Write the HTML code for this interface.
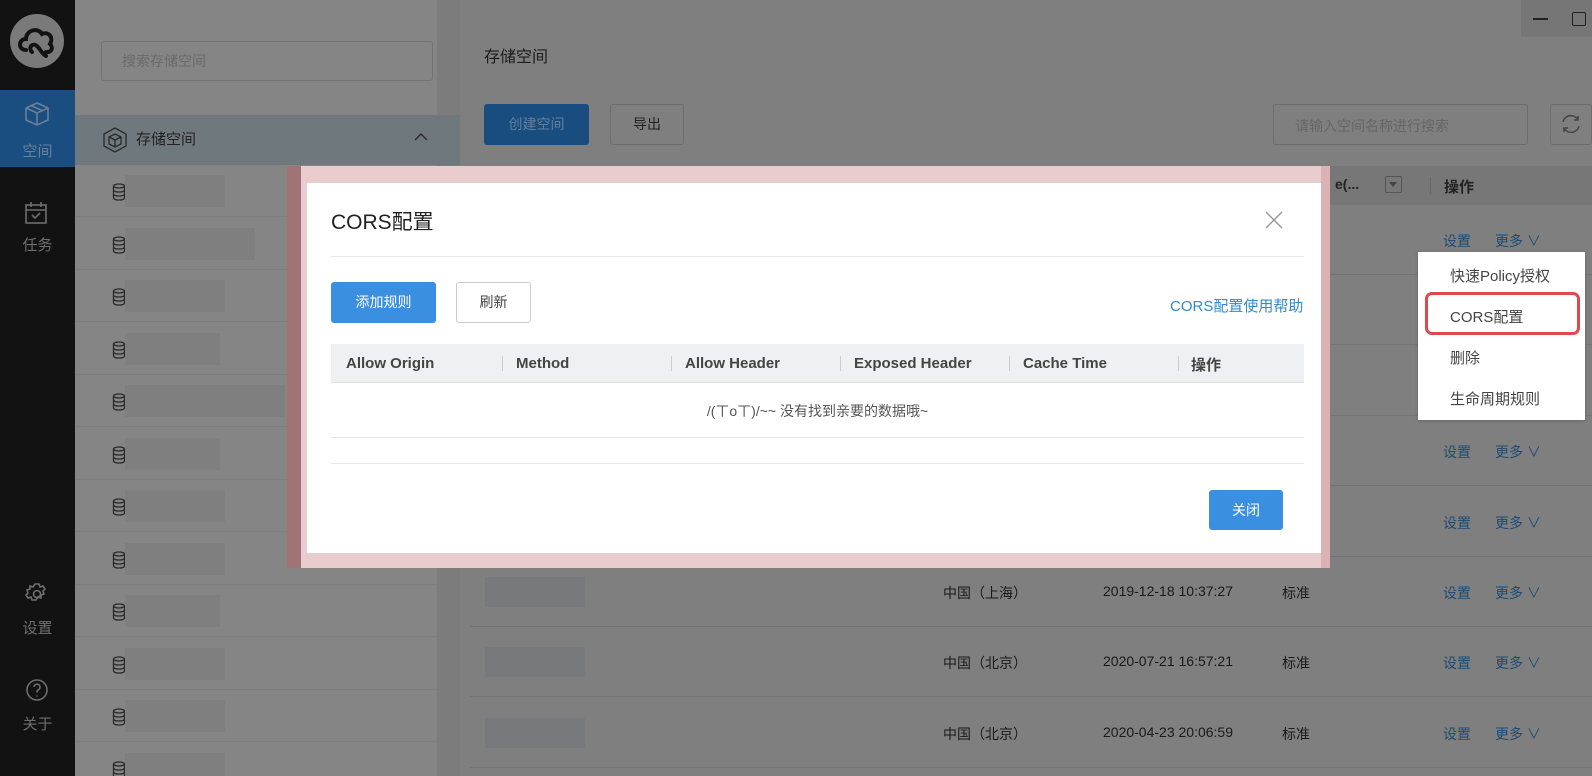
<!DOCTYPE html>
<html style="width:1592px;height:776px;overflow:hidden"><head><meta charset="utf-8"><style>
*{margin:0;padding:0;box-sizing:border-box}
body{width:1592px;height:776px;overflow:hidden;position:relative;background:#7f7f7f;font-family:"Liberation Sans","Noto Sans CJK SC",sans-serif;font-size:14px;color:#1f1f1f}
.a{position:absolute}
.side{left:0;top:0;width:75px;height:776px;background:#121212}
.nav{left:0;width:75px;text-align:center;color:#6e6e6e;font-size:15px}
.panel{left:75px;top:0;width:362px;height:776px;background:#858585}
.row{left:75px;width:362px;height:52px;border-bottom:1px solid #7d7d7d}
.blk{background:#7b7b7b}
.mrow{left:470px;width:1122px;border-bottom:1px solid #747474;height:70px}
.cell{font-size:14px;color:#1a1a1a}
.lnk{color:#1d4b75}
#wrap{position:absolute;left:0;top:0;width:1592px;height:776px;overflow:hidden}
</style></head><body><div id="wrap">
<div class="a side"></div>
<div class="a" style="left:10px;top:14px;width:54px;height:54px;border-radius:50%;background:#7a7a7a"></div>
<svg class="a" style="left:14px;top:20px" width="46" height="42" viewBox="0 0 46 42"><path d="M12 30 C4 30 4 19 12 19 C12 10 24 7 28 14 C34 11 40 17 36 24 C40 28 37 33 32 32 M18 32 C14 28 18 22 23 26 C27 30 28 34 32 36" fill="none" stroke="#121212" stroke-width="4" stroke-linecap="round"/></svg>
<div class="a" style="left:0;top:90px;width:75px;height:77px;background:#1a4d80"></div>
<svg class="a" style="left:24px;top:101px" width="26" height="26" viewBox="0 0 26 26" fill="none" stroke="#6a7f97" stroke-width="1.6"><path d="M13 2 L24 7 L24 19 L13 24 L2 19 L2 7 Z M2 7 L13 12 L24 7 M13 12 V24 M7 4.5 L18 9.5"/></svg>
<div class="a nav" style="top:140px;color:#6c8098">空间</div>
<svg class="a" style="left:24px;top:201px" width="24" height="24" viewBox="0 0 24 24" fill="none" stroke="#6e6e6e" stroke-width="1.6"><rect x="2" y="4" width="20" height="18"/><path d="M2 9H22M7 1V6M17 1V6M8 14l3 3 5-5"/></svg>
<div class="a nav" style="top:234px">任务</div>
<svg class="a" style="left:25px;top:582px" width="24" height="24" viewBox="0 0 24 24" fill="none" stroke="#6e6e6e" stroke-width="1.6"><circle cx="12" cy="12" r="3.5"/><path d="M10 2h4l1 3 3-1 2 3-2 2 1 3-3 1 0 3-3-1-2 3h-4l-1-3-3 1-2-3 2-2-1-3 3-1 0-3 3 1z"/></svg>
<div class="a nav" style="top:617px">设置</div>
<svg class="a" style="left:25px;top:678px" width="24" height="24" viewBox="0 0 24 24" fill="none" stroke="#6e6e6e" stroke-width="1.6"><circle cx="12" cy="12" r="10"/><path d="M9 9a3 3 0 1 1 4 3c-1 .5-1 1.5-1 2.5M12 17.5v1"/></svg>
<div class="a nav" style="top:713px">关于</div>

<div class="a panel"></div>
<div class="a" style="left:437px;top:0;width:23px;height:776px;background:#7c7c7c"></div>
<div class="a" style="left:101px;top:41px;width:332px;height:40px;border:1px solid #747474;border-radius:3px;color:#6a6a6a;padding:9px 20px;font-size:14px">搜索存储空间</div>
<div class="a" style="left:75px;top:115px;width:385px;height:50px;background:#6f787d"></div>
<svg class="a" style="left:103px;top:127px" width="24" height="26" viewBox="0 0 24 26" fill="none" stroke="#2a2a2a" stroke-width="1.3"><path d="M12 1L23 7V19L12 25L1 19V7Z M6 10L12 7L18 10V17L12 20L6 17Z M6 10L12 13L18 10M12 13V20"/></svg>
<div class="a" style="left:136px;top:128px;font-size:15px;color:#222">存储空间</div>
<svg class="a" style="left:414px;top:132px" width="14" height="10" viewBox="0 0 14 10" fill="none" stroke="#2a2a2a" stroke-width="1.4"><path d="M1 8L7 2L13 8"/></svg>
<div id="rows"></div>
<script>
var h='';
var w=[100,130,100,95,160,95,100,100,95,100,100,100];
for(var i=0;i<12;i++){var t=165+i*52.5;
h+='<div class="a row" style="top:'+t+'px"></div>';
h+='<svg class="a" style="left:112px;top:'+(t+18)+'px" width="14" height="18" viewBox="0 0 14 18" fill="none" stroke="#2a2a2a" stroke-width="1.3"><ellipse cx="7" cy="3" rx="5.5" ry="2"/><path d="M1.5 3v12c0 1.2 2.5 2 5.5 2s5.5-.8 5.5-2V3M1.5 7c0 1.2 2.5 2 5.5 2s5.5-.8 5.5-2M1.5 11c0 1.2 2.5 2 5.5 2s5.5-.8 5.5-2"/></svg>';
h+='<div class="a blk" style="left:125px;top:'+(t+10)+'px;width:'+w[i]+'px;height:32px;background:#7f7f7f"></div>';}
var d=['','','','','','中国（上海）|2019-12-18 10:37:27','中国（北京）|2020-07-21 16:57:21','中国（北京）|2020-04-23 20:06:59'];
for(var j=0;j<8;j++){var y=205+j*70.4;
h+='<div class="a mrow" style="top:'+y+'px"></div>';
h+='<div class="a blk" style="left:485px;top:'+(y+20)+'px;width:100px;height:30px;background:#78797d"></div>';
h+='<div class="a cell lnk" style="left:1443px;top:'+(y+26)+'px">设置</div><div class="a cell lnk" style="left:1495px;top:'+(y+26)+'px">更多 ∨</div>';
if(d[j]){var p=d[j].split('|');h+='<div class="a cell" style="left:943px;top:'+(y+26)+'px">'+p[0]+'</div><div class="a cell" style="left:1103px;top:'+(y+26)+'px">'+p[1]+'</div><div class="a cell" style="left:1282px;top:'+(y+26)+'px">标准</div>';}}
document.getElementById('rows').innerHTML=h;
</script>
<div class="a" style="left:1521px;top:0;width:71px;height:37px;background:#767676"></div>
<div class="a" style="left:1533px;top:18px;width:15px;height:2px;background:#222"></div>
<div class="a" style="left:1572px;top:12px;width:14px;height:14px;border:1.5px solid #222;border-radius:2px"></div>
<div class="a" style="left:484px;top:43px;font-size:16px;color:#1c1c1c">存储空间</div>
<div class="a" style="left:484px;top:104px;width:105px;height:41px;background:#194d80;border-radius:3px;color:#5f7f9f;text-align:center;line-height:41px">创建空间</div>
<div class="a" style="left:610px;top:104px;width:74px;height:41px;border:1px solid #6c6c6c;border-radius:3px;text-align:center;line-height:39px;color:#222">导出</div>
<div class="a" style="left:1273px;top:104px;width:255px;height:41px;border:1px solid #6c6c6c;border-radius:3px;color:#666;padding:11px 21px">请输入空间名称进行搜索</div>
<div class="a" style="left:1550px;top:104px;width:42px;height:41px;border:1px solid #6c6c6c;border-radius:3px"></div>
<svg class="a" style="left:1560px;top:113px" width="22" height="22" viewBox="0 0 22 22" fill="none" stroke="#444" stroke-width="1.5"><path d="M3 9a8 8 0 0 1 15-2M19 13a8 8 0 0 1-15 2M18 3v4h-4M4 19v-4h4"/></svg>
<div class="a" style="left:460px;top:166px;width:1132px;height:39px;background:#777"></div>
<div class="a" style="left:1335px;top:176px;font-weight:bold;color:#222">e(...</div>
<div class="a" style="left:1385px;top:176px;width:17px;height:17px;border:1px solid #555;border-radius:2px"></div>
<div class="a" style="left:1389px;top:182px;border:4px solid transparent;border-top:5px solid #444"></div>
<div class="a" style="left:1430px;top:177px;width:1px;height:17px;background:#666"></div>
<div class="a" style="left:1444px;top:176px;font-weight:bold;color:#222;font-size:15px">操作</div>

<div class="a" style="left:1418px;top:252px;width:167px;height:168px;background:#fff;box-shadow:0 1px 4px rgba(0,0,0,.2)"></div>
<div class="a" style="left:1450px;top:265px;color:#444;font-size:15px">快速Policy授权</div>
<div class="a" style="left:1425px;top:292px;width:155px;height:43px;border:3px solid #e0484b;border-radius:7px"></div>
<div class="a" style="left:1450px;top:306px;color:#444;font-size:15px">CORS配置</div>
<div class="a" style="left:1450px;top:347px;color:#444;font-size:15px">删除</div>
<div class="a" style="left:1450px;top:388px;color:#444;font-size:15px">生命周期规则</div>

<div class="a" style="left:287px;top:166px;width:14px;height:402px;background:#a07474"></div>
<div class="a" style="left:301px;top:166px;width:1029px;height:402px;background:#e9cdce"></div>
<div class="a" style="left:1321px;top:166px;width:9px;height:402px;background:#dcb3b4"></div>
<div class="a" style="left:307px;top:183px;width:1014px;height:370px;background:#fff"></div>
<div class="a" style="left:331px;top:206px;font-size:21px;color:#222">CORS配置</div>
<svg class="a" style="left:1265px;top:211px" width="18" height="18" viewBox="0 0 18 18" stroke="#999" stroke-width="1.5"><path d="M1 1L17 17M17 1L1 17"/></svg>
<div class="a" style="left:331px;top:256px;width:973px;height:1px;background:#e8e8e8"></div>
<div class="a" style="left:331px;top:282px;width:105px;height:41px;background:#3a8fe1;border-radius:3px;color:#fff;text-align:center;line-height:41px">添加规则</div>
<div class="a" style="left:456px;top:282px;width:75px;height:41px;border:1px solid #ccc;border-radius:3px;text-align:center;line-height:39px;color:#444">刷新</div>
<div class="a" style="left:1170px;top:295px;color:#2f8bcb;font-size:15px">CORS配置使用帮助</div>
<div class="a" style="left:331px;top:344px;width:973px;height:39px;background:#eff0f4;border-bottom:1px solid #e0e0e0"></div>
<div class="a" style="left:346px;top:355px;font-weight:bold;color:#444;font-size:15px">Allow Origin</div>
<div class="a" style="left:502px;top:356px;width:1px;height:15px;background:#ccc"></div>
<div class="a" style="left:516px;top:355px;font-weight:bold;color:#444;font-size:15px">Method</div>
<div class="a" style="left:671px;top:356px;width:1px;height:15px;background:#ccc"></div>
<div class="a" style="left:685px;top:355px;font-weight:bold;color:#444;font-size:15px">Allow Header</div>
<div class="a" style="left:840px;top:356px;width:1px;height:15px;background:#ccc"></div>
<div class="a" style="left:854px;top:355px;font-weight:bold;color:#444;font-size:15px">Exposed Header</div>
<div class="a" style="left:1009px;top:356px;width:1px;height:15px;background:#ccc"></div>
<div class="a" style="left:1023px;top:355px;font-weight:bold;color:#444;font-size:15px">Cache Time</div>
<div class="a" style="left:1178px;top:356px;width:1px;height:15px;background:#ccc"></div>
<div class="a" style="left:1191px;top:354px;font-weight:bold;color:#444;font-size:15px">操作</div>
<div class="a" style="left:331px;top:401px;width:973px;text-align:center;color:#555;font-size:14px">/(ㄒoㄒ)/~~ 没有找到亲要的数据哦~</div>
<div class="a" style="left:331px;top:437px;width:973px;height:1px;background:#e6e6e6"></div>
<div class="a" style="left:331px;top:463px;width:973px;height:1px;background:#e6e6e6"></div>
<div class="a" style="left:1209px;top:490px;width:74px;height:40px;background:#3a8fe1;border-radius:3px;color:#fff;text-align:center;line-height:40px">关闭</div>
</div></body></html>
